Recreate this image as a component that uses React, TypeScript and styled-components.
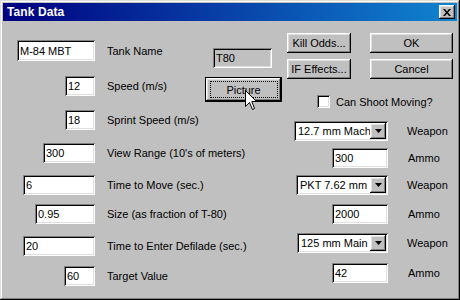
import React from "react";
import styled, { createGlobalStyle } from "styled-components";

const Global = createGlobalStyle`
  html, body { margin: 0; padding: 0; background: #c0c0c0; }
  body { font-family: "Liberation Sans", Arial, sans-serif; }
`;

const raised = `box-shadow: inset -1px -1px #000, inset 1px 1px #fff, inset -2px -2px #808080, inset 2px 2px #dfdfdf;`;
const sunken = `box-shadow: inset 1px 1px #808080, inset -1px -1px #fff, inset 2px 2px #000, inset -2px -2px #dfdfdf;`;

const Window = styled.div`
  position: relative;
  width: 460px;
  height: 300px;
  box-sizing: border-box;
  padding: 3px;
  background: #c0c0c0;
  box-shadow: inset -1px -1px #000, inset 1px 1px #dfdfdf, inset -2px -2px #808080, inset 2px 2px #fff;
  display: flex;
  flex-direction: column;
  font-family: "Liberation Sans", Arial, sans-serif;
  font-size: 11px;
  color: #000;
  overflow: hidden;
`;

const TitleBar = styled.div`
  height: 18px;
  flex-shrink: 0;
  display: flex;
  align-items: center;
  justify-content: space-between;
  padding: 0 2px 0 4px;
  background: linear-gradient(90deg, #000080 0%, #1084d0 100%);
`;

const TitleText = styled.span`
  color: #fff;
  font-weight: bold;
  font-size: 12px;
  letter-spacing: 0.1px;
`;

const CloseButton = styled.div`
  width: 16px;
  height: 14px;
  background: #c0c0c0;
  ${raised}
  display: flex;
  align-items: center;
  justify-content: center;
`;

const Body = styled.div`
  flex: 1;
  display: flex;
`;

const LeftCol = styled.div`
  width: 284px;
  flex-shrink: 0;
  display: flex;
  flex-direction: column;
`;

const FieldRow = styled.div<{ $mt: number; $h?: number }>`
  display: flex;
  align-items: center;
  height: ${(p) => p.$h ?? 20}px;
  margin-top: ${(p) => p.$mt}px;
`;

const InputCell = styled.div<{ $w: number }>`
  width: ${(p) => p.$w}px;
  flex-shrink: 0;
  display: flex;
  justify-content: flex-end;
  height: 100%;
`;

const TextBox = styled.input<{ $w: number }>`
  width: ${(p) => p.$w}px;
  height: 100%;
  box-sizing: border-box;
  border: none;
  outline: none;
  margin: 0;
  padding: 0 2px 0 3px;
  background: #fff;
  ${sunken}
  font-family: "Liberation Sans", Arial, sans-serif;
  font-size: 11px;
  color: #000;
`;

const Label = styled.span<{ $ml?: number; $w?: number }>`
  margin-left: ${(p) => p.$ml ?? 12}px;
  ${(p) => (p.$w ? `width: ${p.$w}px; flex-shrink: 0;` : "")}
  white-space: nowrap;
`;

const StaticField = styled.div<{ $dy: number }>`
  align-self: flex-start;
  margin-top: ${(p) => p.$dy}px;
  width: 59px;
  height: 20px;
  box-sizing: border-box;
  padding: 0 3px;
  display: flex;
  align-items: center;
  background: #c0c0c0;
  ${sunken}
`;

const Button = styled.div`
  display: flex;
  align-items: center;
  justify-content: center;
  background: #c0c0c0;
  ${raised}
  white-space: nowrap;
  font-size: 11px;
`;

const DefaultButton = styled.div<{ $dy: number }>`
  position: relative;
  align-self: flex-start;
  margin-top: ${(p) => p.$dy}px;
  width: 77px;
  height: 25px;
  box-sizing: border-box;
  border: 1px solid #000;
  background: #c0c0c0;
  ${raised}
  display: flex;
  align-items: center;
  justify-content: center;
  &::after {
    content: "";
    position: absolute;
    left: 4px;
    right: 3px;
    top: 3px;
    bottom: 3px;
    border: 1px dotted #000;
  }
`;

const RightCol = styled.div`
  width: 166px;
  flex-shrink: 0;
  display: flex;
  flex-direction: column;
  margin-top: 12px;
`;

const ButtonGrid = styled.div`
  display: grid;
  grid-template-columns: 64px 83px;
  grid-auto-rows: 20px;
  column-gap: 19px;
  row-gap: 6px;
`;

const CheckRow = styled.div`
  display: flex;
  align-items: center;
  gap: 6px;
  height: 13px;
  margin-top: 16px;
  padding-left: 30px;
`;

const CheckBox = styled.div`
  width: 13px;
  height: 13px;
  box-sizing: border-box;
  background: #fff;
  ${sunken}
`;

const WidgetRow = styled.div<{ $mt: number }>`
  display: flex;
  align-items: center;
  height: 20px;
  margin-top: ${(p) => p.$mt}px;
`;

const WidgetCell = styled.div`
  width: 101px;
  flex-shrink: 0;
  display: flex;
  justify-content: flex-end;
  height: 100%;
`;

const Select = styled.div<{ $w: number }>`
  width: ${(p) => p.$w}px;
  height: 100%;
  box-sizing: border-box;
  padding: 2px;
  display: flex;
  background: #fff;
  ${sunken}
`;

const SelectText = styled.div`
  flex: 1;
  min-width: 0;
  overflow: hidden;
  white-space: nowrap;
  padding-left: 2px;
  line-height: 16px;
  font-size: 11px;
`;

const DropButton = styled.div`
  width: 16px;
  flex-shrink: 0;
  background: #c0c0c0;
  ${raised}
  display: flex;
  align-items: center;
  justify-content: center;
`;

const SmallBox = styled(TextBox)`
  height: 100%;
`;

const Cursor = styled.svg`
  position: absolute;
  left: 245px;
  top: 90px;
  width: 13px;
  height: 21px;
`;

const leftRows = [
  { mt: 19, h: 21, w: 78, value: "M-84 MBT", label: "Tank Name" },
  { mt: 15, w: 30, value: "12", label: "Speed (m/s)" },
  { mt: 14, w: 30, value: "18", label: "Sprint Speed (m/s)" },
  { mt: 13, w: 52, value: "300", label: "View Range (10's of meters)" },
  { mt: 12, w: 72, value: "6", label: "Time to Move (sec.)" },
  { mt: 9, w: 60, value: "0.95", label: "Size (as fraction of T-80)" },
  { mt: 12, w: 72, value: "20", label: "Time to Enter Defilade (sec.)" },
  { mt: 10, w: 31, value: "60", label: "Target Value" },
];

type Widget =
  | { kind: "select"; mt: number; w: number; text: string }
  | { kind: "ammo"; mt: number; value: string };

const rightRows: Widget[] = [
  { kind: "select", mt: 13, w: 94, text: "12.7 mm Machine Gun" },
  { kind: "ammo", mt: 7, value: "300" },
  { kind: "select", mt: 7, w: 92, text: "PKT 7.62 mm MG" },
  { kind: "ammo", mt: 9, value: "2000" },
  { kind: "select", mt: 9, w: 91, text: "125 mm Main Gun" },
  { kind: "ammo", mt: 10, value: "42" },
];

const DownArrow = () => (
  <svg width="7" height="4" viewBox="0 0 7 4">
    <path d="M0 0H7L3.5 4Z" fill="#000" />
  </svg>
);

export default function App() {
  return (
    <>
      <Global />
      <Window>
        <TitleBar>
          <TitleText>Tank Data</TitleText>
          <CloseButton>
            <svg width="8" height="7" viewBox="0 0 8 7">
              <path d="M0 0h2l2 2.5L6 0h2L5 3.5 8 7H6L4 4.5 2 7H0l3-3.5z" fill="#000" />
            </svg>
          </CloseButton>
        </TitleBar>
        <Body>
          <LeftCol>
            {leftRows.map((r, i) => (
              <FieldRow key={i} $mt={r.mt} $h={r.h}>
                <InputCell $w={92}>
                  <TextBox $w={r.w} value={r.value} readOnly />
                </InputCell>
                {i === 0 ? (
                  <>
                    <Label $w={106}>{r.label}</Label>
                    <StaticField $dy={8}>T80</StaticField>
                  </>
                ) : i === 1 ? (
                  <>
                    <Label $w={98}>{r.label}</Label>
                    <DefaultButton $dy={1}>Picture</DefaultButton>
                  </>
                ) : (
                  <Label>{r.label}</Label>
                )}
              </FieldRow>
            ))}
          </LeftCol>
          <RightCol>
            <ButtonGrid>
              <Button>Kill Odds...</Button>
              <Button>OK</Button>
              <Button>IF Effects...</Button>
              <Button>Cancel</Button>
            </ButtonGrid>
            <CheckRow>
              <CheckBox />
              <span>Can Shoot Moving?</span>
            </CheckRow>
            {rightRows.map((r, i) => (
              <WidgetRow key={i} $mt={r.mt}>
                <WidgetCell>
                  {r.kind === "select" ? (
                    <Select $w={r.w}>
                      <SelectText>{r.text}</SelectText>
                      <DropButton>
                        <DownArrow />
                      </DropButton>
                    </Select>
                  ) : (
                    <SmallBox $w={56} value={r.value} readOnly />
                  )}
                </WidgetCell>
                <Label $ml={r.kind === "select" ? 19 : 20}>
                  {r.kind === "select" ? "Weapon" : "Ammo"}
                </Label>
              </WidgetRow>
            ))}
          </RightCol>
        </Body>
        <Cursor viewBox="0 0 13 21">
          <path
            d="M0.5 0.5V16.5L4.5 12.5L7.5 19.5L9.5 18.5L6.8 11.5H11.5Z"
            fill="#fff"
            stroke="#000"
            strokeWidth="1"
            strokeLinejoin="miter"
          />
        </Cursor>
      </Window>
    </>
  );
}
